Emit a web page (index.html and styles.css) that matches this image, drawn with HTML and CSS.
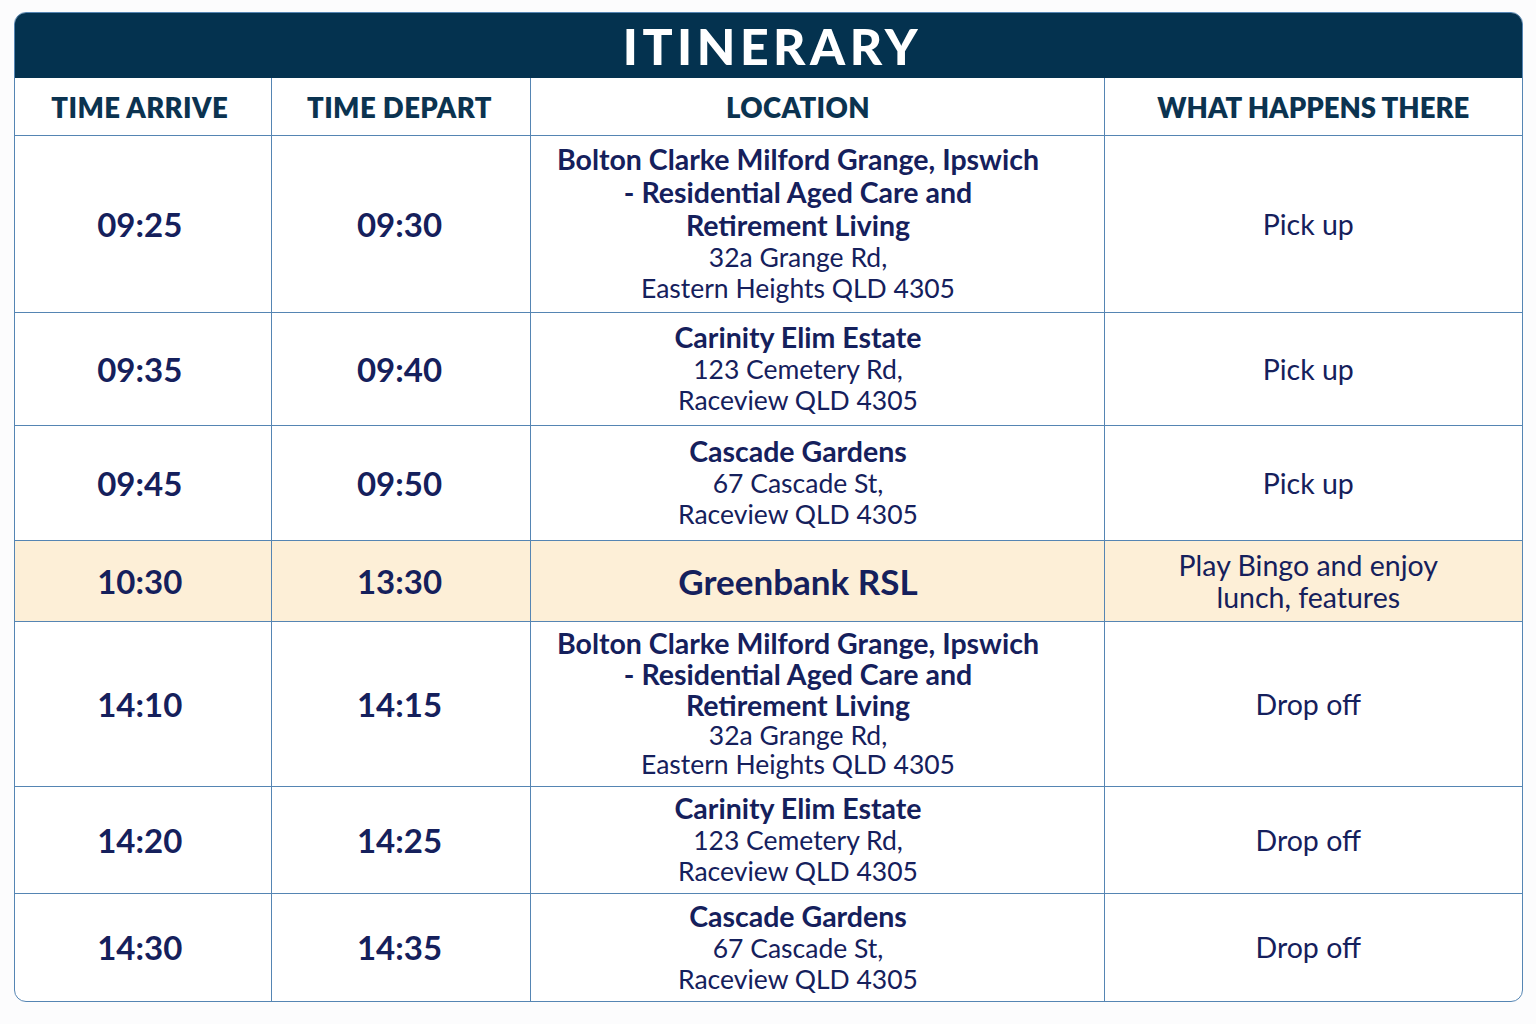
FILE: index.html
```html
<!DOCTYPE html>
<html lang="en">
<head>
<meta charset="utf-8">
<title>Itinerary</title>
<link rel="stylesheet" href="styles.css">
</head>
<body>
<div class="card">
  <div class="title">ITINERARY</div>
  <table class="itin">
    <colgroup>
      <col class="c1"><col class="c2"><col class="c3"><col class="c4">
    </colgroup>
    <thead>
      <tr class="hrow">
        <th class="k1">TIME ARRIVE</th><th class="k2">TIME DEPART</th><th class="k3">LOCATION</th><th class="k4">WHAT HAPPENS THERE</th>
      </tr>
    </thead>
    <tbody>
      <tr class="r1">
        <td class="time k1">09:25</td><td class="time k2">09:30</td>
        <td class="loc k3"><b>Bolton Clarke Milford Grange, Ipswich<br>- Residential Aged Care and<br>Retirement Living</b><span>32a Grange Rd,<br>Eastern Heights QLD 4305</span></td>
        <td class="what k4">Pick up</td>
      </tr>
      <tr class="r2">
        <td class="time k1">09:35</td><td class="time k2">09:40</td>
        <td class="loc k3"><b>Carinity Elim Estate</b><span>123 Cemetery Rd,<br>Raceview QLD 4305</span></td>
        <td class="what k4">Pick up</td>
      </tr>
      <tr class="r3">
        <td class="time k1">09:45</td><td class="time k2">09:50</td>
        <td class="loc k3"><b>Cascade Gardens</b><span>67 Cascade St,<br>Raceview QLD 4305</span></td>
        <td class="what k4">Pick up</td>
      </tr>
      <tr class="r4 hl">
        <td class="time k1">10:30</td><td class="time k2">13:30</td>
        <td class="loc big k3"><b>Greenbank RSL</b></td>
        <td class="what k4">Play Bingo and enjoy<br>lunch, features</td>
      </tr>
      <tr class="r5">
        <td class="time k1">14:10</td><td class="time k2">14:15</td>
        <td class="loc tight k3"><b>Bolton Clarke Milford Grange, Ipswich<br>- Residential Aged Care and<br>Retirement Living</b><span>32a Grange Rd,<br>Eastern Heights QLD 4305</span></td>
        <td class="what k4">Drop off</td>
      </tr>
      <tr class="r6">
        <td class="time k1">14:20</td><td class="time k2">14:25</td>
        <td class="loc k3"><b>Carinity Elim Estate</b><span>123 Cemetery Rd,<br>Raceview QLD 4305</span></td>
        <td class="what k4">Drop off</td>
      </tr>
      <tr class="r7">
        <td class="time k1">14:30</td><td class="time k2">14:35</td>
        <td class="loc k3"><b>Cascade Gardens</b><span>67 Cascade St,<br>Raceview QLD 4305</span></td>
        <td class="what k4">Drop off</td>
      </tr>
    </tbody>
  </table>
</div>
</body>
</html>
```
FILE: styles.css
```css
* { box-sizing: border-box; }
html, body { margin: 0; padding: 0; background: #fcfcfd; }
body {
  font-family: Lato, "Noto Sans", "Liberation Sans", sans-serif;
  color: #15205c;
  padding: 12px 13px 0 14px;
}
.card {
  width: 1509px;
  border: 1px solid #5585b3;
  border-radius: 12px;
  overflow: hidden;
  background: #ffffff;
}
.title {
  height: 66px;
  background: #04324f;
  color: #ffffff;
  font-weight: 900;
  font-size: 50px;
  letter-spacing: 4.5px;
  text-align: center;
  line-height: 68px;
  margin: -1px -1px 0 -1px;
  padding-left: 8px;
}
.itin {
  width: 100%;
  border-collapse: collapse;
  table-layout: fixed;
}
.c1 { width: 256px; }
.c2 { width: 259px; }
.c3 { width: 574px; }
.c4 { width: 420px; }
.itin th, .itin td {
  border: 1px solid #5585b3;
  text-align: center;
  vertical-align: middle;
  padding: 0;
}
.itin .k1 { padding-right: 6px; }
.itin .k2 { padding-right: 2px; }
.itin .k3 { padding-right: 38px; }
.itin .k4 { padding-right: 12px; }
.itin th.k4 { padding-right: 2px; }
.itin tr > *:first-child { border-left: none; }
.itin tr > *:last-child { border-right: none; }
.itin thead tr > * { border-top: none; }
.itin tbody tr:last-child > * { border-bottom: none; }
.hrow { height: 57px; }
.itin th {
  color: #0b3350;
  font-weight: 800;
  font-size: 27.5px;
  letter-spacing: 0.4px;
  padding-top: 3px;
}
.itin th.k4 { letter-spacing: 0; }
.r1 { height: 177px; }
.r2 { height: 113px; }
.r3 { height: 115px; }
.r4 { height: 81px; }
.r5 { height: 165px; }
.r6 { height: 107px; }
.r7 { height: 108px; }
.hl td { background: #fdefd7; }
.time {
  font-weight: 700;
  font-size: 33px;
}
.loc b {
  display: block;
  font-weight: 700;
  font-size: 28.5px;
  line-height: 33px;
}
.loc span {
  display: block;
  font-size: 26.5px;
  line-height: 31px;
}
.loc.tight b { line-height: 31px; }
.loc.tight span { line-height: 29px; }
.loc.big b { font-size: 35px; line-height: 38px; }
.what {
  font-size: 28.5px;
  line-height: 32px;
}
```
